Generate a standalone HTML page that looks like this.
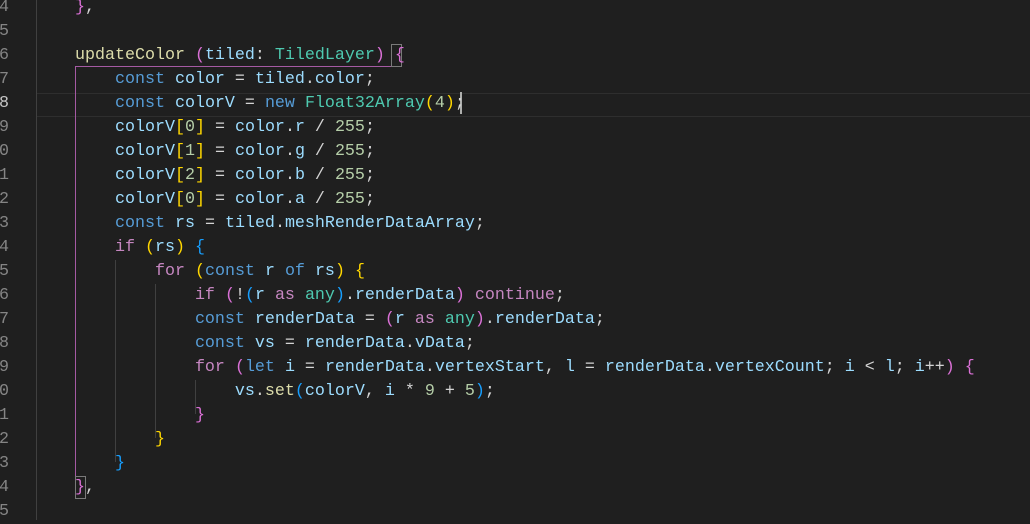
<!DOCTYPE html>
<html><head><meta charset="utf-8"><style>
body{margin:0;width:1030px;height:518px;background:#1f1f1f;overflow:hidden;position:relative;font-family:"Liberation Mono",monospace;font-size:16.67px;}
#w{position:absolute;left:0;top:2px;width:1030px;height:518px}
.ln{position:absolute;left:-5px;width:14px;text-align:right;color:#858585;height:24px;line-height:24px}
.l{position:absolute;left:35px;white-space:pre;color:#d4d4d4;height:24px;line-height:24px}
.g{position:absolute;width:1px;background:#404040}
.k{color:#569cd6}.f{color:#dcdcaa}.v{color:#9cdcfe}.t{color:#4ec9b0}.c{color:#c586c0}.n{color:#b5cea8}
.y{color:#ffd700}.p{color:#da70d6}.b{color:#179fff}
</style></head><body><div id="w">
<div style="position:absolute;left:36px;top:91px;width:994px;height:22px;border-top:1px solid #2e2e2e;border-bottom:1px solid #2e2e2e"></div>
<div class="g" style="left:36px;top:-2px;height:520px"></div>
<div class="g" style="left:75px;top:65px;height:419px;background:#a55aa3"></div>
<div style="position:absolute;left:75px;top:64px;width:327px;height:1px;background:#a55aa3"></div>
<div class="g" style="left:115px;top:258px;height:202px"></div>
<div class="g" style="left:155px;top:282px;height:154px"></div>
<div class="g" style="left:195px;top:378px;height:34px"></div>
<div style="position:absolute;left:391px;top:42px;width:9px;height:21px;border:1px solid #7a7a7a"></div>
<div style="position:absolute;left:75px;top:474px;width:9px;height:21px;border:1px solid #7a7a7a"></div>
<div style="position:absolute;left:460px;top:90px;width:2px;height:22px;background:#aeafad"></div>
<div class="ln" style="top:-6px">4</div><div class="ln" style="top:18px">5</div><div class="ln" style="top:42px">6</div><div class="ln" style="top:66px">7</div><div class="ln" style="top:90px;color:#c6c6c6">8</div><div class="ln" style="top:114px">9</div><div class="ln" style="top:138px">0</div><div class="ln" style="top:162px">1</div><div class="ln" style="top:186px">2</div><div class="ln" style="top:210px">3</div><div class="ln" style="top:234px">4</div><div class="ln" style="top:258px">5</div><div class="ln" style="top:282px">6</div><div class="ln" style="top:306px">7</div><div class="ln" style="top:330px">8</div><div class="ln" style="top:354px">9</div><div class="ln" style="top:378px">0</div><div class="ln" style="top:402px">1</div><div class="ln" style="top:426px">2</div><div class="ln" style="top:450px">3</div><div class="ln" style="top:474px">4</div><div class="ln" style="top:498px">5</div>
<div class="l" style="top:-6px">    <span class="p">}</span>,</div>
<div class="l" style="top:42px">    <span class="f">updateColor</span> <span class="p">(</span><span class="v">tiled</span>: <span class="t">TiledLayer</span><span class="p">)</span> <span class="p">{</span></div>
<div class="l" style="top:66px">        <span class="k">const</span> <span class="v">color</span> = <span class="v">tiled</span>.<span class="v">color</span>;</div>
<div class="l" style="top:90px">        <span class="k">const</span> <span class="v">colorV</span> = <span class="k">new</span> <span class="t">Float32Array</span><span class="y">(</span><span class="n">4</span><span class="y">)</span>;</div>
<div class="l" style="top:114px">        <span class="v">colorV</span><span class="y">[</span><span class="n">0</span><span class="y">]</span> = <span class="v">color</span>.<span class="v">r</span> / <span class="n">255</span>;</div>
<div class="l" style="top:138px">        <span class="v">colorV</span><span class="y">[</span><span class="n">1</span><span class="y">]</span> = <span class="v">color</span>.<span class="v">g</span> / <span class="n">255</span>;</div>
<div class="l" style="top:162px">        <span class="v">colorV</span><span class="y">[</span><span class="n">2</span><span class="y">]</span> = <span class="v">color</span>.<span class="v">b</span> / <span class="n">255</span>;</div>
<div class="l" style="top:186px">        <span class="v">colorV</span><span class="y">[</span><span class="n">0</span><span class="y">]</span> = <span class="v">color</span>.<span class="v">a</span> / <span class="n">255</span>;</div>
<div class="l" style="top:210px">        <span class="k">const</span> <span class="v">rs</span> = <span class="v">tiled</span>.<span class="v">meshRenderDataArray</span>;</div>
<div class="l" style="top:234px">        <span class="c">if</span> <span class="y">(</span><span class="v">rs</span><span class="y">)</span> <span class="b">{</span></div>
<div class="l" style="top:258px">            <span class="c">for</span> <span class="y">(</span><span class="k">const</span> <span class="v">r</span> <span class="k">of</span> <span class="v">rs</span><span class="y">)</span> <span class="y">{</span></div>
<div class="l" style="top:282px">                <span class="c">if</span> <span class="p">(</span>!<span class="b">(</span><span class="v">r</span> <span class="c">as</span> <span class="t">any</span><span class="b">)</span>.<span class="v">renderData</span><span class="p">)</span> <span class="c">continue</span>;</div>
<div class="l" style="top:306px">                <span class="k">const</span> <span class="v">renderData</span> = <span class="p">(</span><span class="v">r</span> <span class="c">as</span> <span class="t">any</span><span class="p">)</span>.<span class="v">renderData</span>;</div>
<div class="l" style="top:330px">                <span class="k">const</span> <span class="v">vs</span> = <span class="v">renderData</span>.<span class="v">vData</span>;</div>
<div class="l" style="top:354px">                <span class="c">for</span> <span class="p">(</span><span class="k">let</span> <span class="v">i</span> = <span class="v">renderData</span>.<span class="v">vertexStart</span>, <span class="v">l</span> = <span class="v">renderData</span>.<span class="v">vertexCount</span>; <span class="v">i</span> &lt; <span class="v">l</span>; <span class="v">i</span>++<span class="p">)</span> <span class="p">{</span></div>
<div class="l" style="top:378px">                    <span class="v">vs</span>.<span class="f">set</span><span class="b">(</span><span class="v">colorV</span>, <span class="v">i</span> * <span class="n">9</span> + <span class="n">5</span><span class="b">)</span>;</div>
<div class="l" style="top:402px">                <span class="p">}</span></div>
<div class="l" style="top:426px">            <span class="y">}</span></div>
<div class="l" style="top:450px">        <span class="b">}</span></div>
<div class="l" style="top:474px">    <span class="p">}</span>,</div>
</div></body></html>
